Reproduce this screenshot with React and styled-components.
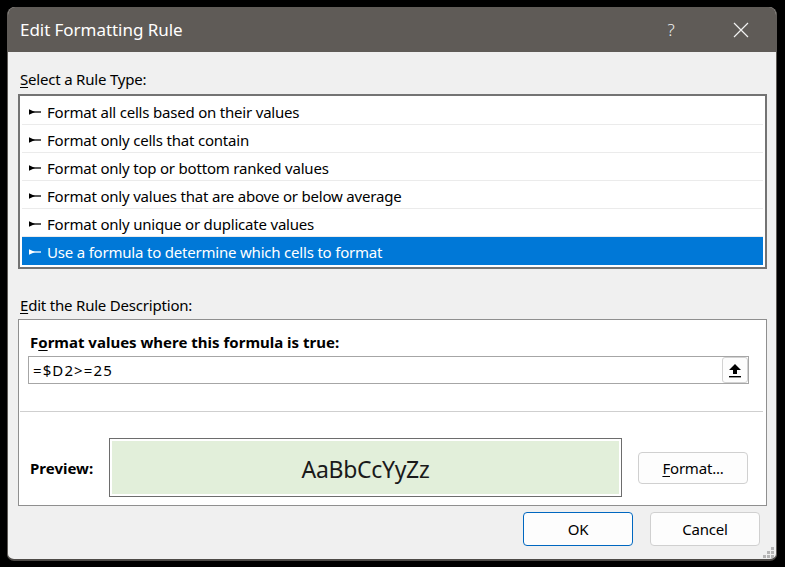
import React from "react";
import styled, { createGlobalStyle } from "styled-components";

const Global = createGlobalStyle`
  html, body { margin: 0; padding: 0; background: #000; }
  body { font-family: "Noto Sans", "Open Sans", sans-serif; }
  #root { padding: 7px; }
`;

const UI = `"Noto Sans", "Open Sans", sans-serif`;

const Dialog = styled.div`
  position: relative;
  width: 770px;
  height: 554px;
  box-sizing: border-box;
  display: flex;
  flex-direction: column;
  background: #f0f0f0;
  border: 1px solid #5f5b57;
  border-top: none;
  border-bottom: 2px solid #4d4a47;
  border-radius: 8px 8px 7px 7px;
  overflow: hidden;
  font-family: ${UI};
  color: #000;
`;

const TitleBar = styled.div`
  height: 45px;
  flex: none;
  display: flex;
  align-items: center;
  background: #5f5b57;
  padding-left: 12px;
`;

const Title = styled.div`
  flex: 1;
  color: #ffffff;
  font-size: 17px;
  letter-spacing: -0.05px;
`;

const TitleButton = styled.div`
  width: 70px;
  height: 45px;
  display: flex;
  align-items: center;
  justify-content: center;
  color: #f2f2f2;
  font-size: 17px;
  font-weight: 300;
`;

const Body = styled.div`
  flex: 1;
  display: flex;
  flex-direction: column;
  padding: 17px 9px 0 10px;
`;

const Label = styled.div`
  font-size: 15px;
  line-height: 20px;
  height: 20px;
  padding-left: 2px;
  margin-top: ${(p) => p.$mt || 0}px;
  letter-spacing: -0.2px;
  u { text-underline-offset: 2px; }
`;

const ListBox = styled.div`
  margin-top: 5px;
  height: 175px;
  box-sizing: border-box;
  border: 2px solid #737373;
  background: #fff;
  padding: 1px 2px 2px;
`;

const Row = styled.div`
  height: 28px;
  box-sizing: border-box;
  display: flex;
  align-items: center;
  gap: 5px;
  padding: 3px 0 0 7px;
  border-bottom: 1px solid ${(p) => (p.$last ? "transparent" : "#ebebeb")};
  background: ${(p) => (p.$selected ? "#0078d7" : "transparent")};
  color: ${(p) => (p.$selected ? "#ffffff" : "#000000")};
  font-size: 15px;
  letter-spacing: -0.2px;
`;

const DescBox = styled.div`
  margin-top: 4px;
  height: 187px;
  box-sizing: border-box;
  border: 1px solid #8f8f8f;
  background: #fff;
  padding: 12px 17px 8px 9px;
  display: flex;
  flex-direction: column;
`;

const BoldLabel = styled.div`
  font-size: 15px;
  font-weight: 700;
  line-height: 20px;
  height: 20px;
  padding-left: 2px;
  letter-spacing: 0px;
  u { text-underline-offset: 2px; }
`;

const FormulaField = styled.div`
  margin-top: 4px;
  height: 28px;
  box-sizing: border-box;
  border: 1px solid #a6a6a6;
  display: flex;
  align-items: center;
  padding: 0 0 0 4px;
`;

const FormulaText = styled.div`
  flex: 1;
  font-size: 15px;
  letter-spacing: 1.1px;
`;

const RefButton = styled.div`
  width: 26px;
  height: 26px;
  box-sizing: border-box;
  border: 1px solid #d2d2d2;
  border-radius: 3px;
  background: #fdfdfd;
  display: flex;
  align-items: center;
  justify-content: center;
`;

const Separator = styled.div`
  height: 1px;
  background: #cfcfcf;
  margin: 27px -14px 0 -8px;
`;

const PreviewRow = styled.div`
  margin-top: 26px;
  height: 59px;
  display: flex;
  align-items: center;
`;

const PreviewLabel = styled.div`
  width: 81px;
  box-sizing: border-box;
  padding-left: 2px;
  font-size: 15px;
  font-weight: 700;
  letter-spacing: 0px;
`;

const PreviewFrame = styled.div`
  width: 513px;
  height: 59px;
  box-sizing: border-box;
  border: 1px solid #6d6d6d;
  padding: 2px;
  background: #fff;
`;

const PreviewFill = styled.div`
  height: 100%;
  background: #e2efda;
  display: flex;
  align-items: center;
  justify-content: center;
  font-size: 23px;
  color: #1a1a1a;
  letter-spacing: -0.3px;
  padding-top: 2px;
  box-sizing: border-box;
`;

const Button = styled.div`
  width: 110px;
  height: ${(p) => p.$h || 34}px;
  box-sizing: border-box;
  border: 1px solid ${(p) => (p.$primary ? "#0067c0" : "#d0d0d0")};
  border-radius: 4px;
  background: #fdfdfd;
  display: flex;
  align-items: center;
  justify-content: center;
  font-size: 15px;
  letter-spacing: -0.2px;
  margin-left: ${(p) => p.$ml || 0}px;
  u { text-underline-offset: 2px; }
`;

const ButtonRow = styled.div`
  margin-top: 6px;
  margin-right: 7px;
  display: flex;
  justify-content: flex-end;
  gap: 17px;
`;

const Grip = styled.svg`
  position: absolute;
  right: 1px;
  bottom: 0px;
`;

const RowIcon = ({ color }) => (
  <svg width="13" height="8" viewBox="0 0 13 8">
    <polygon points="0,1.2 6,4 0,6.8" fill={color} />
    <rect x="4" y="3.35" width="8" height="1.3" fill={color} />
  </svg>
);

const CloseIcon = () => (
  <svg width="16" height="16" viewBox="0 0 16 16">
    <path d="M1 1 L15 15 M15 1 L1 15" stroke="#f2f2f2" strokeWidth="1.2" fill="none" />
  </svg>
);

const UploadIcon = () => (
  <svg width="14" height="15" viewBox="0 0 14 15">
    <polygon points="7,1 13,7 9,7 9,11 5,11 5,7 1,7" fill="#000" />
    <rect x="1" y="13" width="12" height="1.4" fill="#000" />
  </svg>
);

const items = [
  "Format all cells based on their values",
  "Format only cells that contain",
  "Format only top or bottom ranked values",
  "Format only values that are above or below average",
  "Format only unique or duplicate values",
  "Use a formula to determine which cells to format",
];

export default function App() {
  return (
    <>
      <Global />
      <Dialog>
        <TitleBar>
          <Title>Edit Formatting Rule</Title>
          <TitleButton>?</TitleButton>
          <TitleButton>
            <CloseIcon />
          </TitleButton>
        </TitleBar>
        <Body>
          <Label>
            <u>S</u>elect a Rule Type:
          </Label>
          <ListBox>
            {items.map((t, i) => (
              <Row key={t} $selected={i === 5} $last={i === 5}>
                <RowIcon color={i === 5 ? "#fff" : "#000"} />
                {t}
              </Row>
            ))}
          </ListBox>
          <Label $mt={26}>
            <u>E</u>dit the Rule Description:
          </Label>
          <DescBox>
            <BoldLabel>
              F<u>o</u>rmat values where this formula is true:
            </BoldLabel>
            <FormulaField>
              <FormulaText>=$D2&gt;=25</FormulaText>
              <RefButton>
                <UploadIcon />
              </RefButton>
            </FormulaField>
            <Separator />
            <PreviewRow>
              <PreviewLabel>Preview:</PreviewLabel>
              <PreviewFrame>
                <PreviewFill>AaBbCcYyZz</PreviewFill>
              </PreviewFrame>
              <Button $h={32} $ml={16}>
                <span>
                  <u>F</u>ormat...
                </span>
              </Button>
            </PreviewRow>
          </DescBox>
          <ButtonRow>
            <Button $primary>OK</Button>
            <Button>Cancel</Button>
          </ButtonRow>
        </Body>
        <Grip width="13" height="13" viewBox="0 0 13 13">
          {[
            [9, 1],
            [5, 5],
            [9, 5],
            [1, 9],
            [5, 9],
            [9, 9],
          ].map(([x, y]) => (
            <rect key={`${x}-${y}`} x={x} y={y} width="3" height="3" fill="#b5b5b5" />
          ))}
        </Grip>
      </Dialog>
    </>
  );
}
